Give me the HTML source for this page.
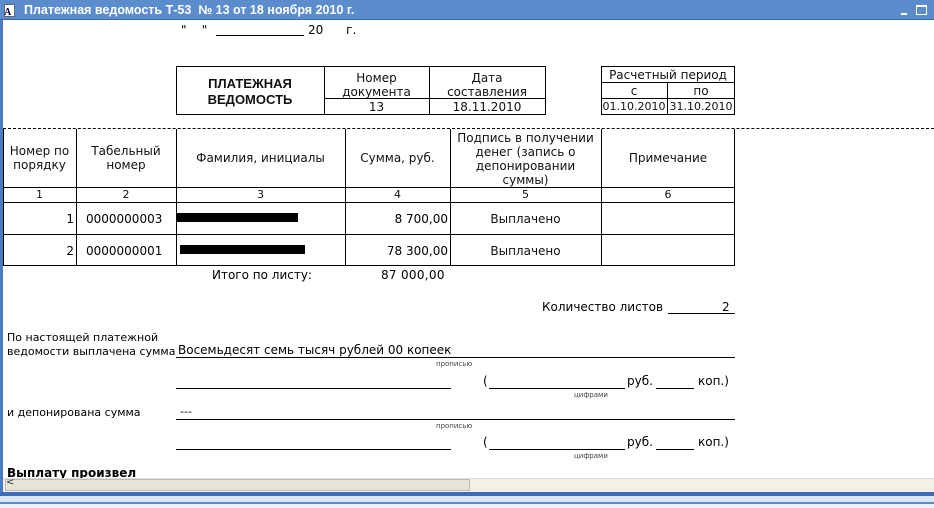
<!DOCTYPE html>
<html><head><meta charset="utf-8"><style>
*{margin:0;padding:0;box-sizing:border-box}
body{width:934px;height:508px;overflow:hidden;background:#fff;position:relative;font-family:"DejaVu Sans","Liberation Sans",sans-serif;font-size:12px;color:#000}
.a{position:absolute}
.c{position:absolute;display:flex;align-items:center;justify-content:center;text-align:center;line-height:14px;white-space:nowrap;color:#111}
.r{position:absolute;display:flex;align-items:center;justify-content:flex-end;white-space:nowrap;padding-right:2px}
.l{position:absolute;display:flex;align-items:center;white-space:nowrap;padding-left:6px}
.h{position:absolute;height:1px;background:#000}
.v{position:absolute;width:1px;background:#000}
.s{font-size:11px}
.b{font-size:12px}
.tiny{position:absolute;font-size:7px;color:#444}
</style></head><body>
<div class="a" style="left:0;top:0;width:934px;height:20px;background:#5b8ccc;border-bottom:1px solid #3a66a8"></div>
<div class="a" style="left:4px;top:4px;width:11px;height:13px;background:#fff;border:1px solid #667"></div>
<div class="a" style="left:4px;top:7px;font:bold 10px 'Liberation Serif',serif;color:#003">A</div>
<div class="a" style="left:24px;top:3px;color:#fff;font:bold 12.5px 'Liberation Sans',sans-serif">Платежная ведомость Т-53&nbsp; № 13 от 18 ноября 2010 г.</div>
<div class="a" style="left:901px;top:13px;width:6px;height:2px;background:#fff"></div>
<div class="a" style="left:916px;top:5px;width:11px;height:10px;border:1px solid #fff;border-top-width:2px"></div>
<div class="a" style="left:0;top:20px;width:3px;height:475px;background:#4a7cc4"></div>

<div class="a" style="left:181px;top:23px">"&nbsp;&nbsp;&nbsp;&nbsp;"</div>
<div class="h" style="left:216px;top:35px;width:88px"></div>
<div class="a" style="left:308px;top:23px">20&nbsp;&nbsp;&nbsp;&nbsp;&nbsp; г.</div>

<div class="a" style="left:176px;top:66px;width:370px;height:49px;border:1px solid #000"></div>
<div class="v" style="left:324px;top:66px;height:49px"></div>
<div class="v" style="left:429px;top:66px;height:49px"></div>
<div class="h" style="left:324px;top:98px;width:221px"></div>
<div class="c" style="left:176px;top:67px;width:148px;height:49px;font-weight:bold;font-family:'Liberation Sans',sans-serif;font-size:13px;line-height:16px">ПЛАТЕЖНАЯ<br>ВЕДОМОСТЬ</div>
<div class="c" style="left:324px;top:69px;width:105px;height:31px">Номер<br>документа</div>
<div class="c" style="left:429px;top:69px;width:116px;height:31px">Дата<br>составления</div>
<div class="c" style="left:324px;top:99px;width:105px;height:16px">13</div>
<div class="c" style="left:429px;top:99px;width:116px;height:16px">18.11.2010</div>

<div class="a" style="left:601px;top:66px;width:134px;height:49px;border:1px solid #000"></div>
<div class="h" style="left:601px;top:82px;width:134px"></div>
<div class="h" style="left:601px;top:98px;width:134px"></div>
<div class="v" style="left:667px;top:82px;height:33px"></div>
<div class="c" style="left:601px;top:67px;width:134px;height:16px">Расчетный период</div>
<div class="c" style="left:601px;top:83px;width:66px;height:16px">с</div>
<div class="c" style="left:667px;top:83px;width:68px;height:16px">по</div>
<div class="c s" style="left:601px;top:99px;width:66px;height:16px">01.10.2010</div>
<div class="c s" style="left:667px;top:99px;width:68px;height:16px">31.10.2010</div>

<div class="a" style="left:3px;top:128px;width:931px;border-top:1px dashed #000"></div>

<div class="a" style="left:3px;top:129px;width:732px;height:137px;border:1px solid #000;border-top:none"></div>
<div class="v" style="left:76px;top:129px;height:137px"></div>
<div class="v" style="left:176px;top:129px;height:137px"></div>
<div class="v" style="left:345px;top:129px;height:137px"></div>
<div class="v" style="left:450px;top:129px;height:137px"></div>
<div class="v" style="left:601px;top:129px;height:137px"></div>
<div class="h" style="left:3px;top:187px;width:732px"></div>
<div class="h" style="left:3px;top:202px;width:732px"></div>
<div class="h" style="left:3px;top:234px;width:732px"></div>
<div class="c" style="left:3px;top:129px;width:73px;height:58px">Номер по<br>порядку</div>
<div class="c" style="left:76px;top:129px;width:100px;height:58px">Табельный<br>номер</div>
<div class="c" style="left:176px;top:129px;width:169px;height:58px">Фамилия, инициалы</div>
<div class="c" style="left:345px;top:129px;width:105px;height:58px">Сумма, руб.</div>
<div class="c" style="left:450px;top:130px;width:151px;height:58px">Подпись в получении<br>денег (запись о<br>депонировании<br>суммы)</div>
<div class="c" style="left:601px;top:129px;width:134px;height:58px">Примечание</div>
<div class="c s" style="left:3px;top:188px;width:73px;height:14px">1</div>
<div class="c s" style="left:76px;top:188px;width:100px;height:14px">2</div>
<div class="c s" style="left:176px;top:188px;width:169px;height:14px">3</div>
<div class="c s" style="left:345px;top:188px;width:105px;height:14px">4</div>
<div class="c s" style="left:450px;top:188px;width:151px;height:14px">5</div>
<div class="c s" style="left:601px;top:188px;width:134px;height:14px">6</div>

<div class="r" style="left:3px;top:203px;width:73px;height:31px">1</div>
<div class="l" style="left:76px;top:203px;width:100px;height:31px;padding-left:10px">0000000003</div>
<div class="a" style="left:176px;top:213px;width:122px;height:9px;background:#000"></div>
<div class="r" style="left:345px;top:203px;width:105px;height:31px">8 700,00</div>
<div class="c" style="left:450px;top:203px;width:151px;height:31px">Выплачено</div>
<div class="r" style="left:3px;top:235px;width:73px;height:31px">2</div>
<div class="l" style="left:76px;top:235px;width:100px;height:31px;padding-left:10px">0000000001</div>
<div class="a" style="left:180px;top:245px;width:125px;height:9px;background:#000"></div>
<div class="r" style="left:345px;top:235px;width:105px;height:31px">78 300,00</div>
<div class="c" style="left:450px;top:235px;width:151px;height:31px">Выплачено</div>

<div class="a" style="left:212px;top:268px">Итого по листу:</div>
<div class="a" style="left:381px;top:268px;letter-spacing:0.3px">87 000,00</div>

<div class="a b" style="left:542px;top:300px">Количество листов</div>
<div class="h" style="left:668px;top:313px;width:67px"></div>
<div class="a b" style="left:722px;top:300px">2</div>

<div class="a s" style="left:7px;top:331px;line-height:14px">По настоящей платежной<br>ведомости выплачена сумма</div>
<div class="a b" style="left:178px;top:343px">Восемьдесят семь тысяч рублей 00 копеек</div>
<div class="h" style="left:176px;top:357px;width:559px"></div>
<div class="tiny" style="left:436px;top:360px">прописью</div>

<div class="h" style="left:176px;top:388px;width:275px"></div>
<div class="a b" style="left:483px;top:374px">(</div>
<div class="h" style="left:489px;top:388px;width:136px"></div>
<div class="a b" style="left:627px;top:374px">руб.</div>
<div class="h" style="left:656px;top:388px;width:38px"></div>
<div class="a b" style="left:698px;top:374px">коп.)</div>
<div class="tiny" style="left:574px;top:391px">цифрами</div>

<div class="a s" style="left:7px;top:406px">и депонирована сумма</div>
<div class="a s" style="left:180px;top:405px">---</div>
<div class="h" style="left:176px;top:419px;width:559px"></div>
<div class="tiny" style="left:436px;top:422px">прописью</div>

<div class="h" style="left:176px;top:449px;width:275px"></div>
<div class="a b" style="left:483px;top:435px">(</div>
<div class="h" style="left:489px;top:449px;width:136px"></div>
<div class="a b" style="left:627px;top:435px">руб.</div>
<div class="h" style="left:656px;top:449px;width:38px"></div>
<div class="a b" style="left:698px;top:435px">коп.)</div>
<div class="tiny" style="left:574px;top:452px">цифрами</div>

<div class="a" style="left:7px;top:466px;font-weight:bold;font-size:12px;height:12px;overflow:hidden">Выплату произвел</div>

<div class="a" style="left:3px;top:478px;width:931px;height:14px;background:#f3f1e6;border-top:1px solid #ddd"></div>
<div class="a" style="left:5px;top:479px;width:465px;height:12px;background:#e6e4d6;border:1px solid #bbb"></div>
<div class="a" style="left:6px;top:477px;font-size:10px;color:#333">&lt;</div>
<div class="a" style="left:0;top:492px;width:934px;height:4px;background:#3d6db8"></div>
<div class="a" style="left:0;top:496px;width:934px;height:6px;background:#dde5f0"></div>
<div class="a" style="left:0;top:502px;width:934px;height:2px;background:#5b8ccc"></div>
<div class="a" style="left:0;top:504px;width:934px;height:4px;background:#eef2f8"></div>
</body></html>
